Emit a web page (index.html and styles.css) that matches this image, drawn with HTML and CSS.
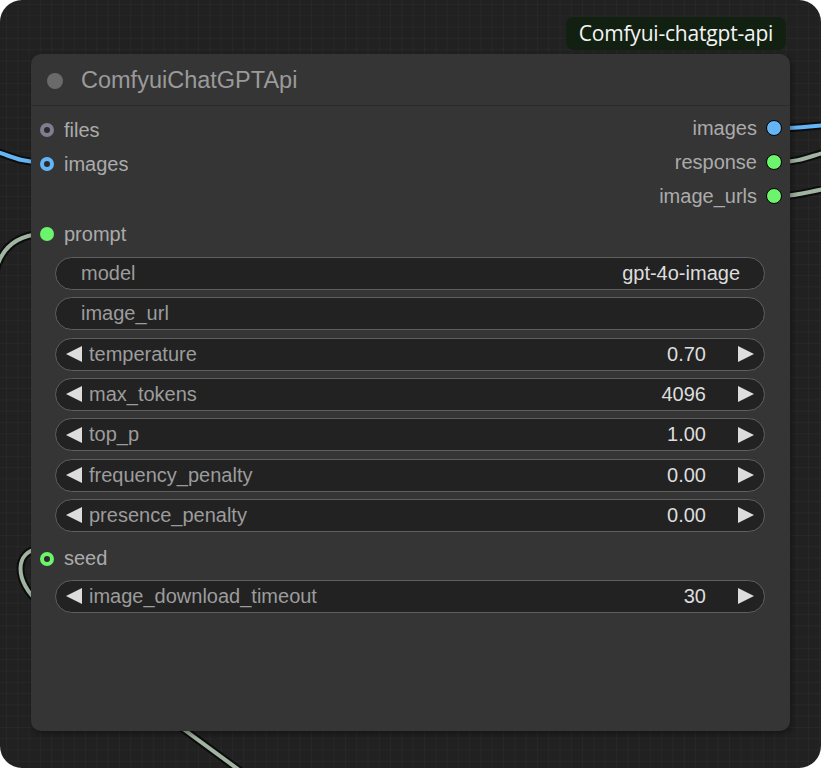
FILE: index.html
```html
<!DOCTYPE html>
<html>
<head>
<meta charset="utf-8">
<link rel="stylesheet" href="styles.css">
</head>
<body>
<div class="canvas">
  <svg class="wires" width="821" height="768" viewBox="0 0 821 768">
    <g class="wire-outline">
      <path d="M -10 150 C 10 155, 18 162, 40 162"/>
      <path d="M -6 280 C -2 250, 15 236, 40 234"/>
      <path d="M 40 548 C 14 552, 14 580, 40 604"/>
      <path d="M 160 712 L 250 778"/>
      <path d="M 780 128 C 800 128, 810 126, 830 125"/>
      <path d="M 780 162 C 800 162, 810 156, 830 151"/>
      <path d="M 780 196 C 800 196, 810 191, 830 188"/>
    </g>
    <g class="wire-blue">
      <path d="M -10 150 C 10 155, 18 162, 40 162"/>
      <path d="M 780 128 C 800 128, 810 126, 830 125"/>
    </g>
    <g class="wire-green">
      <path d="M -6 280 C -2 250, 15 236, 40 234"/>
      <path d="M 40 548 C 14 552, 14 580, 40 604"/>
      <path d="M 160 712 L 250 778"/>
      <path d="M 780 162 C 800 162, 810 156, 830 151"/>
      <path d="M 780 196 C 800 196, 810 191, 830 188"/>
    </g>
  </svg>

  <div class="badge">Comfyui-chatgpt-api</div>

  <div class="node">
    <div class="node-title">
      <span class="title-dot"></span>
      <span class="title-text">ComfyuiChatGPTApi</span>
    </div>
    <div class="node-body">
      <div class="slots">
        <div class="inputs">
          <div class="slot in"><span class="dot ring grey"></span><span>files</span></div>
          <div class="slot in"><span class="dot ring blue"></span><span>images</span></div>
        </div>
        <div class="outputs">
          <div class="slot out"><span>images</span><span class="dot solid blue"></span></div>
          <div class="slot out"><span>response</span><span class="dot solid green"></span></div>
          <div class="slot out"><span>image_urls</span><span class="dot solid green"></span></div>
        </div>
      </div>

      <div class="slot in prompt-row"><span class="dot fill green"></span><span>prompt</span></div>

      <div class="widgets">
        <div class="widget text">
          <span class="w-label">model</span>
          <span class="w-value">gpt-4o-image</span>
        </div>
        <div class="widget text">
          <span class="w-label">image_url</span>
          <span class="w-value"></span>
        </div>
        <div class="widget number">
          <svg class="arrow" width="16" height="16" viewBox="0 0 16 16"><polygon points="16,0 16,16 0,8"/></svg>
          <span class="w-label">temperature</span>
          <span class="w-value">0.70</span>
          <svg class="arrow" width="16" height="16" viewBox="0 0 16 16"><polygon points="0,0 0,16 16,8"/></svg>
        </div>
        <div class="widget number">
          <svg class="arrow" width="16" height="16" viewBox="0 0 16 16"><polygon points="16,0 16,16 0,8"/></svg>
          <span class="w-label">max_tokens</span>
          <span class="w-value">4096</span>
          <svg class="arrow" width="16" height="16" viewBox="0 0 16 16"><polygon points="0,0 0,16 16,8"/></svg>
        </div>
        <div class="widget number">
          <svg class="arrow" width="16" height="16" viewBox="0 0 16 16"><polygon points="16,0 16,16 0,8"/></svg>
          <span class="w-label">top_p</span>
          <span class="w-value">1.00</span>
          <svg class="arrow" width="16" height="16" viewBox="0 0 16 16"><polygon points="0,0 0,16 16,8"/></svg>
        </div>
        <div class="widget number">
          <svg class="arrow" width="16" height="16" viewBox="0 0 16 16"><polygon points="16,0 16,16 0,8"/></svg>
          <span class="w-label">frequency_penalty</span>
          <span class="w-value">0.00</span>
          <svg class="arrow" width="16" height="16" viewBox="0 0 16 16"><polygon points="0,0 0,16 16,8"/></svg>
        </div>
        <div class="widget number">
          <svg class="arrow" width="16" height="16" viewBox="0 0 16 16"><polygon points="16,0 16,16 0,8"/></svg>
          <span class="w-label">presence_penalty</span>
          <span class="w-value">0.00</span>
          <svg class="arrow" width="16" height="16" viewBox="0 0 16 16"><polygon points="0,0 0,16 16,8"/></svg>
        </div>
      </div>

      <div class="slot in seed-row"><span class="dot ring green"></span><span>seed</span></div>

      <div class="widget number timeout">
        <svg class="arrow" width="16" height="16" viewBox="0 0 16 16"><polygon points="16,0 16,16 0,8"/></svg>
        <span class="w-label">image_download_timeout</span>
        <span class="w-value">30</span>
        <svg class="arrow" width="16" height="16" viewBox="0 0 16 16"><polygon points="0,0 0,16 16,8"/></svg>
      </div>
    </div>
  </div>
</div>
</body>
</html>
```
FILE: styles.css
```css
html, body {
  margin: 0;
  padding: 0;
  background: #ffffff;
}

.canvas {
  position: relative;
  width: 821px;
  height: 768px;
  overflow: hidden;
  border-radius: 22px;
  background-color: #212121;
  background-image:
    linear-gradient(to right, rgba(255,255,255,0.028) 1px, transparent 1px),
    linear-gradient(to bottom, rgba(255,255,255,0.028) 1px, transparent 1px);
  background-size: 11.3px 11.3px;
  background-position: 6px 4px;
  font-family: "Liberation Sans", Arial, sans-serif;
}

.wires {
  position: absolute;
  left: 0;
  top: 0;
}

.wires path {
  fill: none;
  stroke-linecap: round;
}

.wire-outline path {
  stroke: #0c0c0c;
  stroke-width: 8;
}

.wire-blue path {
  stroke: #64b5f6;
  stroke-width: 4;
}

.wire-green path {
  stroke: #a1b4a1;
  stroke-width: 4;
}

.badge {
  position: absolute;
  left: 566px;
  top: 17px;
  width: 220px;
  height: 33px;
  box-sizing: border-box;
  border-radius: 8px;
  background: #112011;
  color: #f4f4f4;
  font-family: "Open Sans", "Noto Sans", sans-serif;
  font-size: 21px;
  font-weight: 500;
  line-height: 33px;
  text-align: center;
  letter-spacing: -0.2px;
}

.node {
  position: absolute;
  left: 31px;
  top: 54px;
  width: 759px;
  height: 677px;
  box-sizing: border-box;
  background: #353535;
  border-radius: 10px;
  box-shadow: 2px 3px 6px rgba(0,0,0,0.35);
  display: flex;
  flex-direction: column;
}

.node-title {
  height: 51px;
  border-bottom: 1px solid #2a2a2a;
  display: flex;
  align-items: center;
  padding-left: 16px;
  flex-shrink: 0;
}

.title-dot {
  width: 16px;
  height: 16px;
  border-radius: 50%;
  background: #6a6a6a;
  margin-top: 2px;
}

.title-text {
  margin-left: 18px;
  margin-top: 2px;
  color: #9a9a9a;
  font-size: 23.5px;
}

.node-body {
  padding: 5px 25px 0 24px;
  display: flex;
  flex-direction: column;
}

.slots {
  display: flex;
  justify-content: space-between;
  margin-left: -24px;
  margin-right: -25px;
}

.inputs, .outputs {
  display: flex;
  flex-direction: column;
}

.inputs {
  padding-top: 2px;
}

.slot {
  height: 34px;
  display: flex;
  align-items: center;
  color: #ababab;
  font-size: 20px;
}

.slot.in {
  padding-left: 9px;
}

.slot.in .dot {
  margin-right: 10px;
}

.slot.out {
  justify-content: flex-end;
  padding-right: 8px;
}

.slot.out .dot {
  margin-left: 9px;
}

.prompt-row {
  margin-left: -24px;
  margin-top: 4px;
}

.seed-row {
  margin-left: -24px;
  margin-top: 10px;
}

.dot {
  display: inline-block;
  box-sizing: border-box;
  width: 14px;
  height: 14px;
  border-radius: 50%;
  flex-shrink: 0;
}

.dot.ring {
  border: 4.5px solid;
  background: #2a2a2a;
}

.dot.ring.grey { border-color: #7f7d8f; }
.dot.ring.blue { border-color: #64b5f6; }
.dot.ring.green { border-color: #6cf46c; }

.dot.fill.green {
  background: #6cf46c;
}

.dot.solid {
  width: 16px;
  height: 16px;
  border: 1.5px solid #000;
}

.dot.solid.blue { background: #64b5f6; }
.dot.solid.green { background: #6cf46c; }

.widgets {
  display: flex;
  flex-direction: column;
  gap: 7.33px;
  margin-top: 6px;
}

.widget {
  height: 33px;
  box-sizing: border-box;
  border: 1px solid #5f5f5f;
  border-radius: 17px;
  background: #222222;
  display: flex;
  align-items: center;
  font-size: 20px;
}

.widget .w-label {
  color: #9c9c9c;
  flex: 1;
}

.widget .w-value {
  color: #dddddd;
}

.widget.text {
  padding: 0 24px 0 25px;
}

.widget.number {
  padding: 0 10px 0 10px;
}

.widget.number .arrow {
  fill: #dddddd;
  flex-shrink: 0;
}

.widget.number .w-label {
  margin-left: 7px;
}

.widget.number .w-value {
  margin-right: 32px;
}

.timeout {
  margin-top: 4px;
}
```
